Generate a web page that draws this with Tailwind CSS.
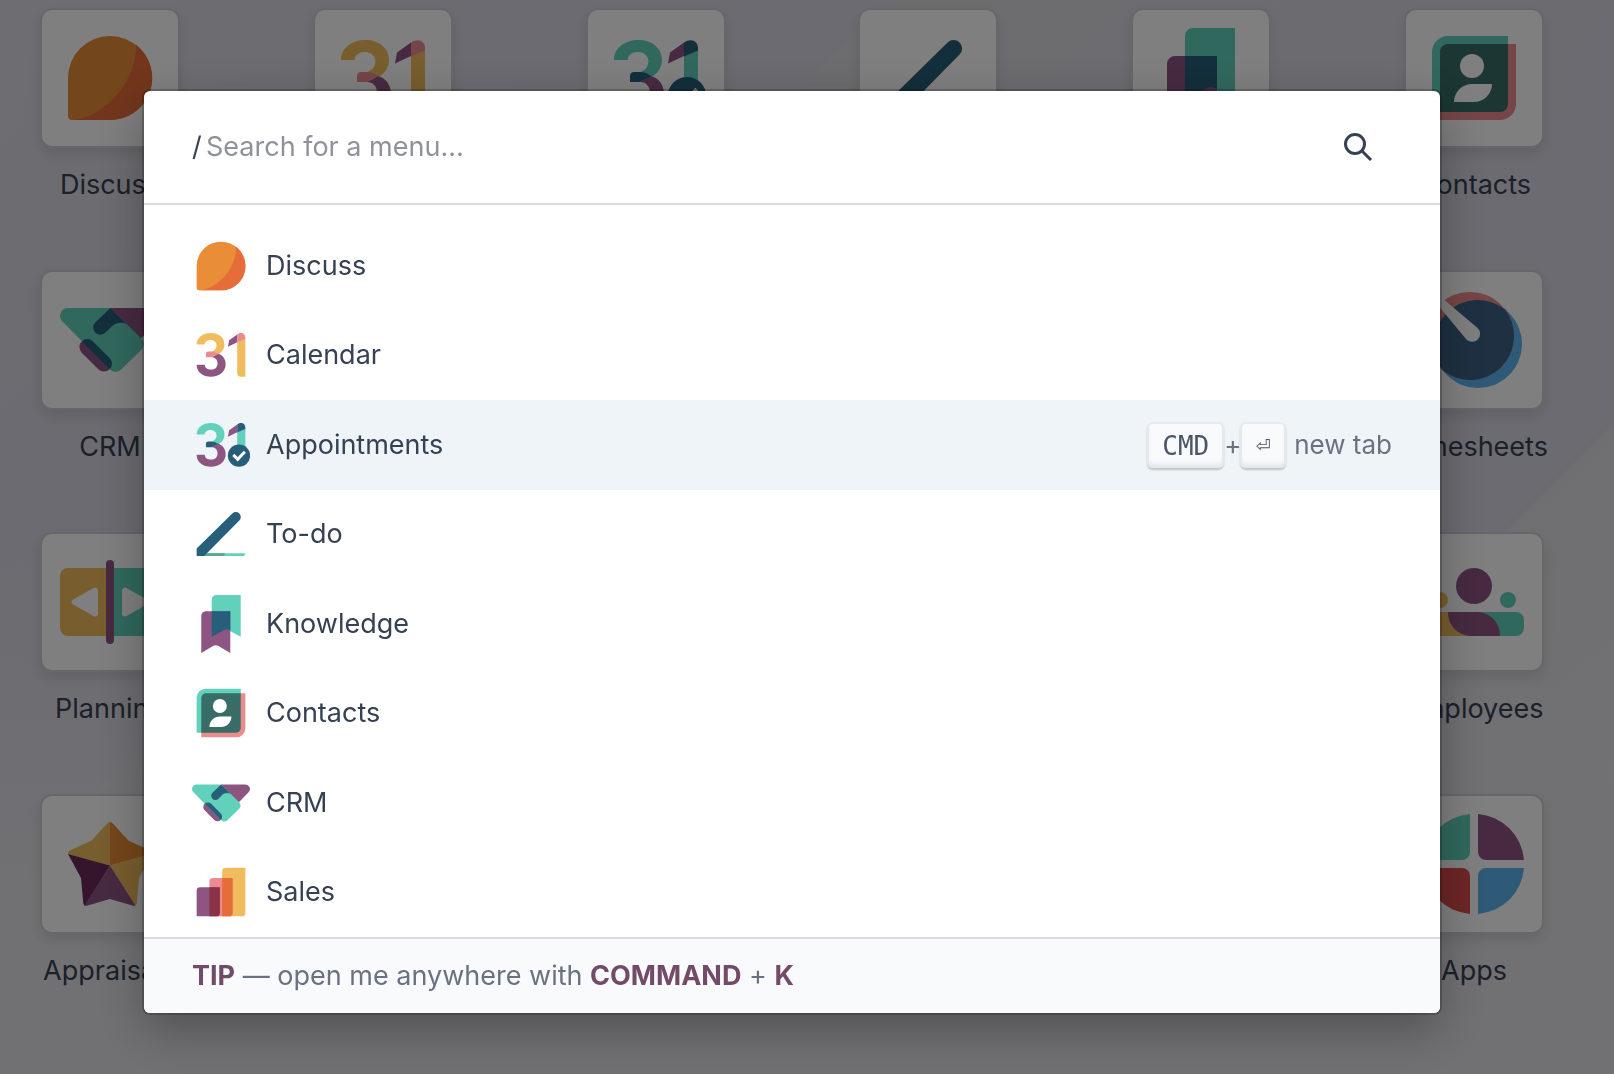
<!DOCTYPE html>
<html lang="en">
<head>
  <meta charset="UTF-8" />
  <meta name="viewport" content="width=device-width, initial-scale=1.0" />
  <title>Odoo</title>
  <script src="https://cdn.jsdelivr.net/npm/@tailwindcss/browser@4"></script>
</head>
<body class="overflow-hidden font-['Inter','Liberation_Sans',sans-serif] text-[27px] leading-[42px] text-gray-700">

  <!-- App icons, all on a 50x50 grid -->
  <svg class="hidden" xmlns="http://www.w3.org/2000/svg">
    <symbol id="discuss" viewBox="0 0 50 50">
      <path fill="#e98d36" d="M4 25a21 21 0 1 1 21 21H6a2 2 0 0 1-2-2z" />
      <path fill="#e66c3a" d="M38 8.4A21 21 0 0 1 25 46H6c16-1 32.500-19 32-37.600z" />
    </symbol>
    <symbol id="calendar" viewBox="0 0 50 50">
      <path fill="#f1bc5d" d="M4 16C4 10 9.500 6 16.200 6 23 6 28 10 28 16c0 4-2.500 7-5.500 8.500L17 22c3-1 4.200-3 4.200-5.500C21.200 14 19 12 16 12s-5.100 1.500-5.100 4z" />
      <path fill="#8f5582" d="M22.500 24c4 1 6.500 4.500 6.500 9 0 6.500-5.500 10.700-12.500 10.700S4 39.800 4 33.300h7c0 2.700 2 4.200 5.500 4.200s5.500-2 5.500-5c0-3.500-2-5.500-5-5.500z" />
      <path fill="#ec8b8e" d="M12 27v-3c0-1.200.8-2 2-2h3c2 0 4 .8 5.700 2.100L17 27z" />
      <path fill="#8f5582" d="M32 12.200l7-4.900V14l-8 3.800z" />
      <path fill="#f1bc5d" d="M39 14l7-3v32.700h-4a3 3 0 0 1-3-3z" />
      <path fill="#ec8b8e" d="M39 7.300C42.500 4.700 46 6.500 46 10v1.200L39 14.200z" />
    </symbol>
    <symbol id="appointments" viewBox="0 0 50 50">
      <path fill="#62d1bb" d="M4 16C4 10 9.500 6 16.200 6 23 6 28 10 28 16c0 4-2.500 7-5.500 8.500L17 22c3-1 4.200-3 4.200-5.500C21.200 14 19 12 16 12s-5.100 1.500-5.100 4z" />
      <path fill="#8f5582" d="M22.500 24c4 1 6.500 4.500 6.500 9 0 6.500-5.500 10.700-12.500 10.700S4 39.800 4 33.300h7c0 2.700 2 4.200 5.500 4.200s5.500-2 5.500-5c0-3.500-2-5.500-5-5.500z" />
      <path fill="#275e79" d="M12 27v-3c0-1.200.8-2 2-2h3c2 0 4 .8 5.700 2.100L17 27z" />
      <path fill="#8f5582" d="M32 12.200l7-4.900V14l-8 3.800z" />
      <path fill="#62d1bb" d="M39 14l7-3v16h-7z" />
      <path fill="#275e79" d="M39 7.300C42.500 4.700 46 6.500 46 10v1.200L39 14.200z" />
      <circle cx="40.500" cy="34.100" r="9.600" fill="#275e79" />
      <path fill="none" stroke="#fff" stroke-width="2.600" d="M35.600 33.500l3.800 3.800 6.200-6.500" />
    </symbol>
    <symbol id="todo" viewBox="0 0 50 50">
      <path fill="#62d1bb" d="M8 41.500h38c0 1.500-1 2.500-2.500 2.500H8z" />
      <path fill="#52ab8a" d="M8 41.500h20.500c-.6 1.500-1.500 2.500-3 2.500H8z" />
      <path fill="#275e79" d="M4 37.500L34.800 7.300a4.200 4.200 0 0 1 6 6L10.500 44H4z" />
    </symbol>
    <symbol id="knowledge" viewBox="0 0 50 50">
      <path fill="#62d1bb" d="M21 0h21v36l-10.500-5.700a4 4 0 0 0-4 0L17 36V4a4 4 0 0 1 4-4z" />
      <path fill="#8f5582" d="M12 14h21v36l-10.500-6.200a4 4 0 0 0-4 0L8 50V18a4 4 0 0 1 4-4z" />
      <path fill="#275e79" d="M17 14h16v16.600c-2-1.600-4-1.300-5.500-.3L17 36z" />
    </symbol>
    <symbol id="contacts" viewBox="0 0 50 50">
      <path fill="#62d1bb" d="M12 4h30v38H4V12a8 8 0 0 1 8-8z" />
      <path fill="#ec8b8e" d="M42 8h4v30a8 8 0 0 1-8 8H8v-4z" />
      <path fill="#376d66" d="M12 8h30v30a4 4 0 0 1-4 4H8V12a4 4 0 0 1 4-4z" />
      <circle cx="24" cy="19" r="6" fill="#fff" />
      <path fill="#fff" d="M15 37c0-5 4-9 9-9h10c0 5-4 9-9 9z" />
    </symbol>
    <symbol id="crm" viewBox="0 0 50 50">
      <path fill="#8f5582" d="M25.200 9H46a4 4 0 0 1 2.800 6.800L40 24.700z" />
      <path d="M13.700 28.500l8.300 8.300" stroke="#8f5582" stroke-width="8" stroke-linecap="round" />
      <path fill="#62d1bb" d="M4 9h21.200l15.500 15.300a4 4 0 0 1 0 5.600L30.600 39.800a4 4 0 0 1-5.600 0L1.200 15.800A4 4 0 0 1 4 9z" />
      <path fill="#275e79" d="M25.200 9l-7.600 7.200a3.600 3.600 0 0 0 5.200 5.100l2.700-2.800c2.500-2.500 5.500-2.600 8-1.300z" />
      <path fill="#275e79" d="M10.900 25.700a4 4 0 0 1 5.600 0l8.300 8.300a4 4 0 0 1 0 5.600z" />
    </symbol>
    <symbol id="sales" viewBox="0 0 50 50">
      <path fill="#f1bc5d" d="M29 4h17v39a3 3 0 0 1-3 3H26V7a3 3 0 0 1 3-3z" />
      <path fill="#ec8b8e" d="M18 13h17v30a3 3 0 0 1-3 3H15V16a3 3 0 0 1 3-3z" />
      <path fill="#8f5582" d="M7 21h17v22a3 3 0 0 1-3 3H4V24a3 3 0 0 1 3-3z" />
      <path fill="#e66c3a" d="M26 13h9v30a3 3 0 0 1-3 3h-6z" />
      <path fill="#8b3347" d="M15 21h9v22a3 3 0 0 1-3 3h-6z" />
    </symbol>
    <symbol id="planning" viewBox="0 0 50 50">
      <path fill="#f1bc5d" d="M4 8h20v34H4a4 4 0 0 1-4-4V12a4 4 0 0 1 4-4z" />
      <path fill="#62d1bb" d="M26 8h20a4 4 0 0 1 4 4v26a4 4 0 0 1-4 4H26z" />
      <rect x="23" y="4" width="4" height="42" rx="2" fill="#8f5582" />
      <path fill="#fff" stroke="#fff" stroke-width="3" stroke-linejoin="round" d="M17.500 19.300v11.400L7.300 25z" />
      <path fill="#fff" stroke="#fff" stroke-width="3" stroke-linejoin="round" d="M32.500 19.300v11.400L42.700 25z" />
    </symbol>
    <symbol id="appraisals" viewBox="0 0 50 50">
      <path fill="#f1bc5d" d="M25 25.800V4c-.5 0-1 .3-1.400.8l-7.800 8.500-10.800 4.900c-.8.400-1 1.100-1 1.800z" />
      <path fill="#e98d36" d="M25 25.800V4c.5 0 1 .3 1.400.8l7.800 8.500 10.800 4.900c.8.400 1 1.100 1 1.800z" />
      <path fill="#f1bc5d" d="M25 25.800L46 20l-6.500 12-1.100 12c0 .9-.2 1.500-.8 1.800z" />
      <path fill="#6a2a59" d="M25 25.800L4 20l6.500 12 1.100 12c0 .9.300 1.600 1 1.900z" />
      <path fill="#8f5582" d="M25 25.800l12.800 20.100c-.3.100-.8.100-1.200 0L25 42.500l-11.600 3.400c-.4.100-.8.100-1.200-.1z" />
    </symbol>
    <symbol id="timesheets" viewBox="0 0 50 50">
      <circle cx="27" cy="27" r="22" fill="#5cb4f0" />
      <circle cx="23" cy="23" r="22" fill="#ec8b8e" />
      <path fill="#3c6185" d="M40.430 9.570A22 22 0 0 1 9.570 40.430 22 22 0 0 1 40.430 9.570z" />
      <path fill="#fff" d="M7 4l3.500 1.300L26.800 19a4 4 0 0 1-5.600 5.800L4 4z" />
    </symbol>
    <symbol id="employees" viewBox="0 0 50 50">
      <circle cx="25" cy="17" r="9" fill="#8f5582" />
      <circle cx="42" cy="24" r="4" fill="#62d1bb" />
      <circle cx="8" cy="24" r="4" fill="#f1bc5d" />
      <path fill="#f1bc5d" d="M4 30h14v12H4a4 4 0 0 1-4-4v-4a4 4 0 0 1 4-4z" />
      <path fill="#f1bc5d" d="M12 30h14v12H12z" />
      <path fill="#62d1bb" d="M26 30h20a4 4 0 0 1 4 4v4a4 4 0 0 1-4 4H26z" />
      <path fill="#8f5582" d="M12 30h14c7 0 12 5 12 12H24c-7 0-12-5-12-12z" />
    </symbol>
    <symbol id="apps" viewBox="0 0 50 50">
      <path fill="#62d1bb" d="M23 0v19a4 4 0 0 1-4 4H0A25 25 0 0 1 23 0z" />
      <path fill="#8f5582" d="M27 0v19a4 4 0 0 0 4 4h19A25 25 0 0 0 27 0z" />
      <path fill="#dc4c4c" d="M23 50V31a4 4 0 0 0-4-4H0a25 25 0 0 0 23 23z" />
      <path fill="#5cb4f0" d="M27 50V31a4 4 0 0 1 4-4h19a25 25 0 0 1-23 23z" />
    </symbol>
  </svg>

  <!-- Home menu -->
  <main class="min-h-screen pt-2 pl-10 pr-[70px] bg-[linear-gradient(to_top,#e3e2e7_0%,#e3e2e7_15%,transparent_50%),linear-gradient(135deg,#dddbe2_0%,#d8d6e2_20%,#d8d7e2_33%,#dad9de_33%,#d9d7e0_50%,#d9d7e4_75.8%,#dfdee2_75.8%,#e3dfe5_88%,#e4e3e4_88%,#e2e1e6_100%)]">
    <nav id="home" class="grid grid-cols-[repeat(6,140px)] justify-between gap-y-16"></nav>
  </main>

  <!-- Command palette -->
  <div class="fixed inset-0 bg-black/50 pt-[91px] pl-36 pr-[174px]">
    <div role="dialog" aria-label="Command palette" class="rounded-md bg-white overflow-hidden shadow-[0_0_0_2px_rgba(0,0,0,0.2),0_16px_48px_rgba(0,0,0,0.3)]">
      <div class="flex items-center h-[114px] px-12 border-b-2 border-[#d8dadd]">
        <label for="search" class="w-[14px]">/</label>
        <input id="search" type="text" placeholder="Search for a menu..." class="flex-1 min-w-0 outline-none placeholder:text-[#8f929b]" />
        <button type="button" aria-label="Search" class="px-[18px]">
          <svg class="size-8" viewBox="0 0 32 32" fill="none" stroke="#374151" stroke-width="3">
            <circle cx="13" cy="13" r="9.500" />
            <path d="M19.500 19.500l9.500 9.500" />
          </svg>
        </button>
      </div>
      <ul id="commands" class="grid auto-rows-fr h-[732px] pt-4 overflow-hidden"></ul>
      <footer class="flex items-center h-[76px] px-12 border-t-2 border-[#d8dadd] bg-[#f9fafc] text-gray-500">
        <p><b class="font-bold text-[#714b67]">TIP</b> — open me anywhere with <b class="font-bold text-[#714b67]">COMMAND</b> + <b class="font-bold text-[#714b67]">K</b></p>
      </footer>
    </div>
  </div>

  <script>
    const homeApps = [
      { icon: "discuss", name: "Discuss" },
      { icon: "calendar", name: "Calendar" },
      { icon: "appointments", name: "Appointments" },
      { icon: "todo", name: "To-do" },
      { icon: "knowledge", name: "Knowledge" },
      { icon: "contacts", name: "Contacts" },
      { icon: "crm", name: "CRM" },
      { icon: "timesheets", name: "Timesheets", last: true },
      { icon: "planning", name: "Planning" },
      { icon: "employees", name: "Employees", last: true },
      { icon: "appraisals", name: "Appraisals" },
      { icon: "apps", name: "Apps", last: true }
    ];

    const commands = [
      { icon: "discuss", name: "Discuss" },
      { icon: "calendar", name: "Calendar" },
      { icon: "appointments", name: "Appointments", active: true },
      { icon: "todo", name: "To-do" },
      { icon: "knowledge", name: "Knowledge" },
      { icon: "contacts", name: "Contacts" },
      { icon: "crm", name: "CRM" },
      { icon: "sales", name: "Sales" }
    ];

    const hint = `
      <span class="flex items-center ml-auto text-[26px] text-gray-500">
        <kbd class="h-[46px] px-[15px] rounded-md bg-[#f9fafc] font-['DejaVu_Sans_Mono',monospace] text-[26px] leading-[48px] text-gray-600 shadow-[inset_0_-4px_4px_#e5e7eb,inset_0_0_0_2px_#e7e9ed,0_2px_2px_rgba(0,0,0,0.2)]">CMD</kbd>
        <span class="w-4 text-center">+</span>
        <kbd class="w-[46px] h-[46px] mr-2 rounded-md bg-[#f9fafc] text-center font-['DejaVu_Sans',sans-serif] text-[18px] leading-[48px] text-gray-600 shadow-[inset_0_-4px_4px_#e5e7eb,inset_0_0_0_2px_#e7e9ed,0_2px_2px_rgba(0,0,0,0.2)]">⏎</kbd>
        new tab
      </span>`;

    document.getElementById("home").innerHTML = homeApps.map(a => `
      <a href="#" class="flex flex-col items-center gap-4 whitespace-nowrap ${a.last ? "col-start-6" : ""}">
        <span class="p-[18px] border-2 border-[#cfced2] rounded-xl bg-white shadow-[0_6px_12px_rgba(0,0,0,0.1)]">
          <svg class="size-25"><use href="#${a.icon}" /></svg>
        </span>
        <span>${a.name}</span>
      </a>
    `).join("");

    document.getElementById("commands").innerHTML = commands.map(c => `
      <li class="${c.active ? "bg-[#eef4f7]" : ""}">
        <a href="#" class="flex items-center h-full px-12">
          <svg class="size-[58px] mr-4"><use href="#${c.icon}" /></svg>
          ${c.name}
          ${c.active ? hint : ""}
        </a>
      </li>
    `).join("");
  </script>
</body>
</html>
